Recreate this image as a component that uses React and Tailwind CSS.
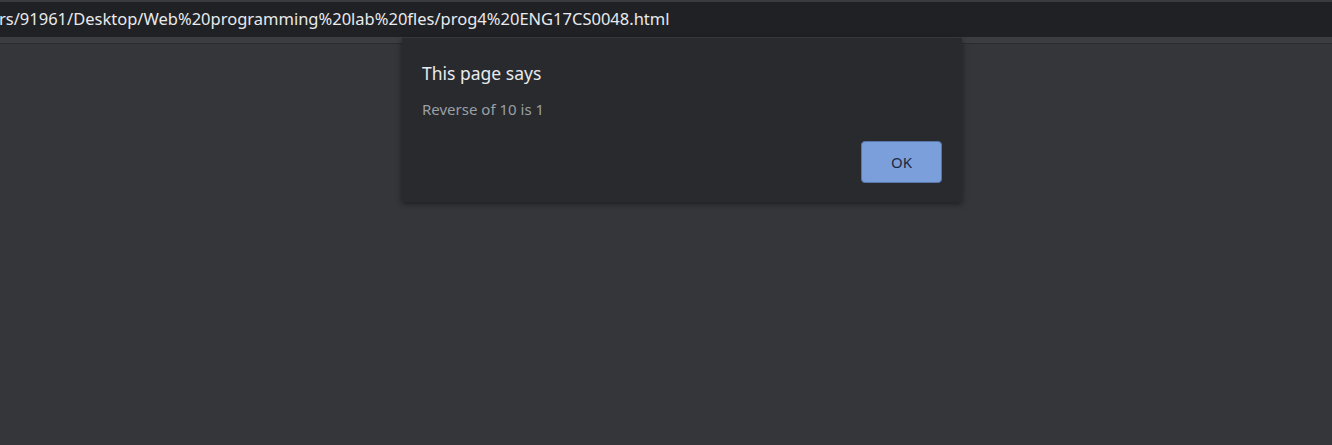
export default function App() {
  const font = { fontFamily: '"Segoe UI", "Noto Sans", "Open Sans", sans-serif' };
  return (
    <div className="w-[1332px] h-[445px] bg-[#35363a] flex flex-col overflow-hidden" style={font}>
      <div className="h-[2px] bg-[#3a3b3f]" />
      <div className="h-[35px] bg-[#202124] flex items-center">
        <span className="text-[16.5px] text-[#e8eaed] whitespace-nowrap -ml-[1px] leading-none">
          rs/91961/Desktop/Web%20programming%20lab%20fles/prog4%20ENG17CS0048.html
        </span>
      </div>
      <div className="h-[6px] bg-[#3c3d41]" />
      <div className="h-[1px] bg-[#2a2b2e]" />
      <div className="flex-1 relative">
        <div className="absolute left-[402px] -top-[6px] w-[560px] h-[164px] bg-[#292a2d] shadow-[0_2px_6px_rgba(0,0,0,0.45)] flex flex-col px-[20px] pt-[24px]">
          <div className="text-[17.5px] text-[#e8eaed] leading-[22px]">This page says</div>
          <div className="text-[15px] text-[#9aa0a6] leading-[20px] mt-[15px]">Reverse of 10 is 1</div>
          <div className="flex justify-end mt-[22px]">
            <button className="w-[81px] h-[42px] rounded-[4px] bg-[#7b9fdb] border border-[#5a76a8] text-[15px] text-[#1b2840]">
              OK
            </button>
          </div>
        </div>
      </div>
    </div>
  );
}
